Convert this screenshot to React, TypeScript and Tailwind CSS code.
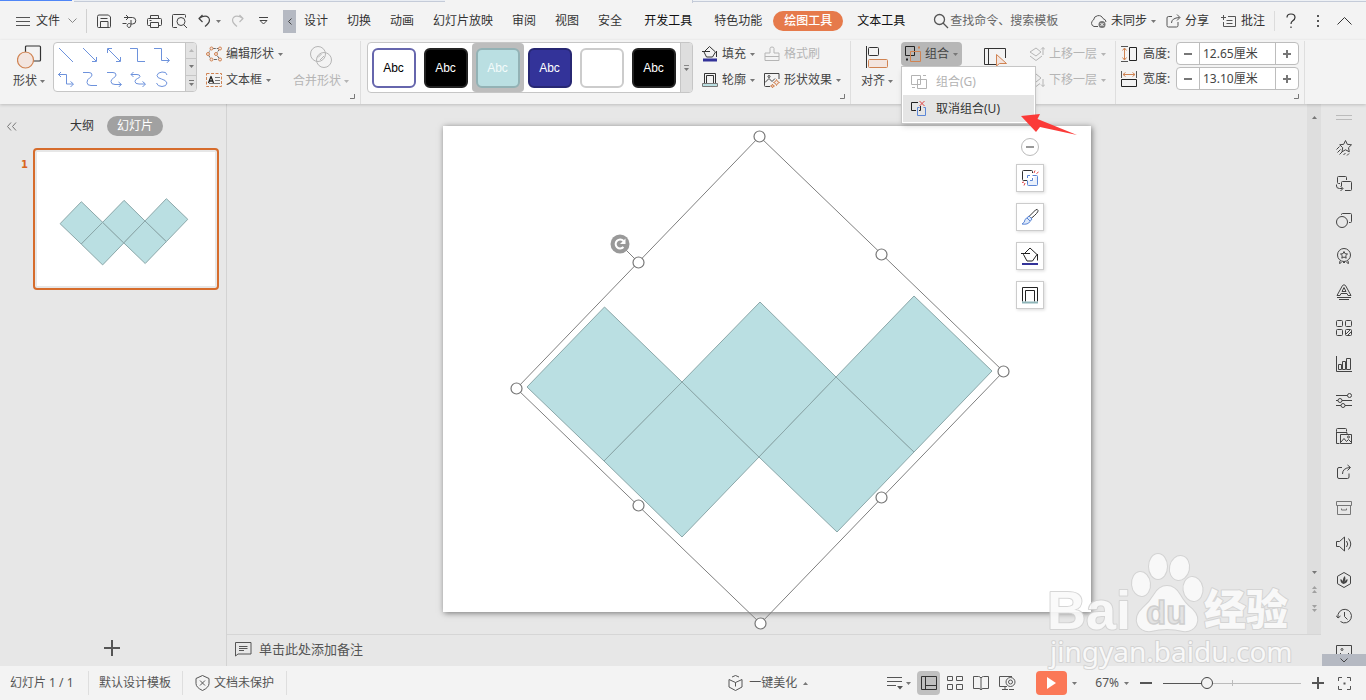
import React from "react";

type Kids = { children?: React.ReactNode };

function Ic({ w = 16, h = 16, className = "", sw = 1, children }: Kids & { w?: number; h?: number; className?: string; sw?: number }) {
  return (
    <svg
      width={w}
      height={h}
      viewBox={`0 0 ${w} ${h}`}
      fill="none"
      stroke="currentColor"
      strokeWidth={sw}
      strokeLinejoin="round"
      className={`block shrink-0 ${className}`}
      aria-hidden="true"
    >
      {children}
    </svg>
  );
}

function Caret({ className = "" }: { className?: string }) {
  return (
    <svg width="5" height="3" viewBox="0 0 5 3" className={`block shrink-0 ${className}`} aria-hidden="true">
      <path d="M0 0h5L2.500 3z" fill="#777" />
    </svg>
  );
}

function Corner() {
  return (
    <Ic w={6} h={6} className="absolute right-1 bottom-1 text-[#777]">
      <path d="M4.500 0v4.500H0" />
    </Ic>
  );
}

const orange = "#d08352";
const blue = "#5b86d6";

/* ---------- menu bar ---------- */

const tabs = ["设计", "切换", "动画", "幻灯片放映", "审阅", "视图", "安全"];

function MenuBar() {
  return (
    <nav className="flex h-[37px] shrink-0 items-center pl-4 pr-[14px] pb-px text-[#333]">
      <button className="flex items-center">
        <Ic w={14} h={11}><path d="M0 1.500h14M0 5.500h14M0 9.500h14" stroke="#555" /></Ic>
        <span className="ml-[6px]">文件</span>
        <Ic w={9} h={6} className="ml-2 text-[#888]"><path d="M.5.5l4 4 4-4" /></Ic>
      </button>
      <span className="ml-[9px] h-6 w-px bg-[#d0d0d0]" />
      <div className="ml-[10px] flex items-center gap-[10px] text-[#444]">
        <button aria-label="保存">
          <Ic w={15} h={15}><path d="M.5 12.500v-10q0-1.500 1.500-1.500h9.500l2 2v9.500q0 1-1 1H1.500q-1 0-1-1zM3.500 4.500h7M3.500 13.500V7.500h7.500v6" /></Ic>
        </button>
        <button aria-label="输出">
          <Ic w={15} h={15}><path d="M2 3.500h8.500a3 3 0 0 1 0 6.500H8.500a2 2 0 1 0-1.500 3.500q2 0 2-3V6M4 1l2.500 2.500L4 6M.5 9.500h4" /></Ic>
        </button>
        <button aria-label="打印">
          <Ic w={15} h={15}><path d="M3.500 4.500v-3h8v3M3 11.500H1.500q-1 0-1-1v-5q0-1 1-1h12q1 0 1 1v5q0 1-1 1H12M3.500 8.500h8v5h-8zM2.500 6.500h2" /></Ic>
        </button>
        <button aria-label="打印预览">
          <Ic w={16} h={15}><path d="M5 13.500H1.500q-1 0-1-1v-11q0-1 1-1h11q1 0 1 1v2M12 11l3 3" /><circle cx="9" cy="7.500" r="4" /></Ic>
        </button>
        <button className="flex items-center" aria-label="撤销">
          <Ic w={13} h={14} sw={1.2}><path d="M4.500 1L1 4.500 4.500 8M1 4.500q6-4 9.500-1 3 4-3.500 9" /></Ic>
          <Caret className="ml-[5px]" />
        </button>
        <button aria-label="恢复" className="text-[#bbb]">
          <Ic w={13} h={14} sw={1.2}><path d="M8.500 1L12 4.500 8.500 8M12 4.500q-6-4-9.500-1-3 4 3.500 9" /></Ic>
        </button>
      </div>
      <button aria-label="自定义" className="ml-[15px] text-[#444]">
        <Ic w={9} h={8}><path d="M0 .5h9M1 3.500h7l-3.500 3.500z" /></Ic>
      </button>
      <button aria-label="向左滚动" className="ml-[15px] flex h-[23px] w-[13px] items-center justify-center bg-[#b5b9c2]">
        <Ic w={4} h={7} className="text-[#444]"><path d="M3.500.5l-3 3 3 3" /></Ic>
      </button>
      <div className="ml-2 flex items-center gap-[19px] whitespace-nowrap">
        {tabs.map((t) => <button key={t}>{t}</button>)}
      </div>
      <button className="ml-[22px] whitespace-nowrap text-[#111]">开发工具</button>
      <button className="ml-[22px] whitespace-nowrap">特色功能</button>
      <button className="ml-[11px] h-5 whitespace-nowrap rounded-full bg-[#e67a4b] px-[11px] font-medium text-white">绘图工具</button>
      <button className="ml-[14px] whitespace-nowrap text-[#111]">文本工具</button>
      <label className="ml-7 flex items-center">
        <Ic w={16} h={16} sw={1.3} className="text-[#555]"><circle cx="6.500" cy="6.500" r="5" /><path d="M10 10l5 5" /></Ic>
        <input aria-label="查找" placeholder="查找命令、搜索模板" className="ml-px w-[112px] bg-transparent outline-none placeholder:text-[#666]" />
      </label>
      <div className="ml-auto flex items-center whitespace-nowrap">
        <button className="flex items-center">
          <Ic w={17} h={15} className="text-[#555]">
            <path d="M8 12.500H4A3.500 3.500 0 0 1 3.500 6 5 5 0 0 1 13 4.500q3 1 3 3.500" />
            <circle cx="12" cy="10.500" r="3.500" fill="#777" stroke="none" />
            <path d="M10.500 9l3 3m0-3l-3 3" stroke="#fff" />
          </Ic>
          <span className="ml-1">未同步</span>
          <Caret className="ml-1" />
        </button>
        <button className="ml-[10px] flex items-center">
          <Ic w={15} h={14} className="text-[#555]"><path d="M6 2.500H2.500q-1.500 0-1.500 1.500v7.500q0 1.500 1.500 1.500h8q1.500 0 1.500-1.500V8M5.500 9Q5.500 4 13.500 3.500M11 .5l3 3-3 3" /></Ic>
          <span className="ml-1">分享</span>
        </button>
        <button className="ml-3 flex items-center">
          <Ic w={16} h={15} className="text-[#555]"><path d="M7 2.500h7.500v10h-12V8M0 3.500h5M2.500 1v5M5.500 6.500h6M5.500 9.500h6" /></Ic>
          <span className="ml-1">批注</span>
        </button>
        <span className="ml-[9px] h-5 w-px bg-[#dcdcdc]" />
        <button aria-label="帮助" className="ml-[11px]">
          <Ic w={10} h={16} sw={1.2}><path d="M1 4.500Q1 1 5 1t4 3.500Q9 6.500 6.500 8 5 9 5 11M5 13.500v1.500" /></Ic>
        </button>
        <button aria-label="更多" className="ml-5">
          <Ic w={4} h={14}><path d="M1 1h2v2H1zM1 6h2v2H1zM1 11h2v2H1z" fill="#555" stroke="none" /></Ic>
        </button>
        <button aria-label="收起" className="ml-[17px]">
          <Ic w={15} h={8}><path d="M.5 7.500l7-7 7 7" /></Ic>
        </button>
      </div>
    </nav>
  );
}

/* ---------- ribbon ---------- */

const lines: React.ReactNode[] = [
  <path d="M1 1l14 14" />,
  <path d="M1 1l13 13M14.500 10v4.500H10" />,
  <path d="M2 2l12 12M14.500 10v4.500H10M1.500 6V1.500H6" />,
  <path d="M0 1.500h7.500v13H15" />,
  <path d="M0 1.500h7.500v12H15M12.500 10.500l3 3-3 2.500" />,
  <path d="M0 3.500h8.500v9.500H15M3 1L.5 3.500 3 6M12.500 10.500l3 2.500-3 3" />,
  <path d="M1 1.500h6q3 0 3 2.500 0 1.500-2.500 3T5 11.500q0 3 4 3h6" />,
  <path d="M1 1.500h6q3 0 3 2.500 0 1.500-2.500 3T5 10.500q0 3 4 3h6M12.500 11l3 2.500-3 2.500" />,
  <path d="M1 3.500h6q3 0 3 2 0 1-2.500 2T5 10.500q0 2.500 4 2.500h6M3.500 1L1 3.500 3.500 6M12.500 10.500l3 2.500-3 3" />,
  <path d="M13 4Q12.500.5 8 1T3 4.500Q3 7 7.500 8t5.500 4q-.5 3.500-5 3.500T2.500 12" />,
];

const swatches = [
  { k: "a", c: "border-[#6666ad] bg-white text-black", label: "Abc" },
  { k: "b", c: "border-[#222] bg-black text-white", label: "Abc" },
  { k: "c", c: "border-[#93b2b5] bg-[#badfe2] text-[#f3fbfb]", label: "Abc", on: true },
  { k: "d", c: "border-[#272773] bg-[#333399] text-white", label: "Abc" },
  { k: "e", c: "border-[#cccccc] bg-white text-white", label: "" },
  { k: "f", c: "border-[#222] bg-black text-white", label: "Abc" },
];

function Small({ icon, text, caret, off, className = "" }: { icon: React.ReactNode; text: string; caret?: boolean; off?: boolean; className?: string }) {
  return (
    <button className={`flex h-[26px] items-center whitespace-nowrap ${off ? "text-[#b5b5b5]" : "text-[#444]"} ${className}`}>
      {icon}
      <span className="ml-1">{text}</span>
      {caret && <Caret className={off ? "ml-1 opacity-50" : "ml-1"} />}
    </button>
  );
}

function Big({ icon, text, off, caret = true }: { icon: React.ReactNode; text: string; off?: boolean; caret?: boolean }) {
  return (
    <button className={`flex flex-col items-center whitespace-nowrap ${off ? "text-[#b5b5b5]" : "text-[#444]"}`}>
      <span className="flex h-8 items-center">{icon}</span>
      <span className="flex items-center">
        {text}
        {caret && <Caret className={off ? "ml-[3px] opacity-50" : "ml-[3px]"} />}
      </span>
    </button>
  );
}

function GroupMenu() {
  return (
    <div className="absolute left-0 top-[25px] z-20 w-[135px] border border-[#c6c6c6] bg-white p-px shadow-md">
      <button className="flex h-[27px] w-full items-center pl-2 text-[#b3b3b3]">
        <Ic><path d="M.5 1.500h9v9h-9zM6.500 5.500h9v9h-9zM12 1.500h3M1 13.500h3" /></Ic>
        <span className="ml-[9px]">组合(G)</span>
      </button>
      <button className="flex h-[27px] w-full items-center bg-[#e5e5e5] pl-2 text-[#333]">
        <Ic>
          <path d="M5 9.500H.5v-8H7M9.500 5v4.500H8" stroke="#222" />
          <path d="M8.500 6.500h-2v8h8v-8h-2" stroke={blue} />
          <path d="M8.500 0l5 5m0-5l-5 5" stroke="#e04545" />
        </Ic>
        <span className="ml-[9px]">取消组合(U)</span>
      </button>
      <svg width="58" height="24" viewBox="0 0 58 24" className="absolute left-[118px] top-[45px]" aria-hidden="true">
        <path d="M1 4l19-2-2.500 5L57 23 20 15l-4 5z" fill="#fb3a38" />
      </svg>
    </div>
  );
}

function SizeField({ id, label, value, icon }: { id: string; label: string; value: string; icon: React.ReactNode }) {
  return (
    <div className="flex h-[25px] items-center text-[#444]">
      {icon}
      <label htmlFor={id} className="ml-[6px] w-[33px] whitespace-nowrap">{label}</label>
      <div className="flex h-[23px] w-[123px] overflow-hidden rounded border border-[#bdbdbd] bg-white">
        <button aria-label={`减小${label}`} className="flex w-[22px] shrink-0 items-center justify-center">
          <Ic w={8} h={8} sw={2}><path d="M0 4h8" stroke="#777" /></Ic>
        </button>
        <input id={id} defaultValue={value} className="w-0 flex-1 border-x border-[#bdbdbd] pl-[3px] outline-none" />
        <button aria-label={`增大${label}`} className="flex w-[22px] shrink-0 items-center justify-center">
          <Ic w={8} h={8} sw={2}><path d="M0 4h8M4 0v8" stroke="#777" /></Ic>
        </button>
      </div>
    </div>
  );
}

function Ribbon() {
  return (
    <section className="relative z-10 flex h-16 shrink-0 bg-[#f3f3f3] pt-px shadow-[0_1px_3px_rgba(0,0,0,0.18)]">
      <div className="relative flex w-[361px] shrink-0 border-r border-[#dedede] pl-[13px]">
        <Big
          text="形状"
          icon={
            <Ic w={25} h={24} sw={1.2}>
              <rect x="8.500" y="1" width="15" height="15" rx="1" stroke="#333" />
              <circle cx="8.500" cy="15" r="8" fill="#f3e5df" stroke={orange} />
            </Ic>
          }
        />
        <div className="ml-2 mt-px flex h-[50px] w-[144px] overflow-hidden rounded border border-[#c6c6c6] bg-white">
          <div className="grid w-[131px] grid-cols-[repeat(5,24px)] content-start justify-start text-[#6d92dc]">
            {lines.map((l, i) => (
              <button key={i} aria-label="线条" className="flex h-6 w-6 items-center justify-center"><Ic>{l}</Ic></button>
            ))}
          </div>
          <div className="flex flex-1 flex-col divide-y divide-[#c6c6c6] border-l border-[#c6c6c6] bg-[#e3e3e3]">
            <button aria-label="上翻" className="flex flex-1 items-center justify-center"><Caret className="rotate-180 opacity-40" /></button>
            <button aria-label="下翻" className="flex flex-1 items-center justify-center"><Caret /></button>
            <button aria-label="更多线条" className="flex flex-1 flex-col items-center justify-center gap-[2px]"><span className="h-px w-[5px] bg-[#777]" /><Caret /></button>
          </div>
        </div>
        <div className="ml-[9px]">
          <Small
            caret
            text="编辑形状"
            icon={
              <Ic>
                <path d="M2 8l3-5.500h9L10 8l4 5.500H5z" stroke="#666" strokeDasharray="3 1" />
                <g fill="#f3e5df" stroke={orange}><circle cx="2" cy="8" r="1.500" /><circle cx="5.500" cy="2.500" r="1.500" /><circle cx="14" cy="2.500" r="1.500" /><circle cx="10" cy="8" r="1.500" /><circle cx="5.500" cy="13.500" r="1.500" /><circle cx="14" cy="13.500" r="1.500" /></g>
              </Ic>
            }
          />
          <Small
            caret
            text="文本框"
            icon={
              <Ic>
                <rect x=".5" y="1.500" width="15" height="13" stroke={orange} strokeDasharray="3 1.500" />
                <path d="M2.500 11L5 4.500 7.500 11M3.500 9h3" stroke="#222" strokeWidth="1.300" />
                <path d="M9 5.500h5M9 8.500h5M3 11.500h11" stroke="#777" />
              </Ic>
            }
          />
        </div>
        <div className="ml-[10px]">
          <Big
            off
            text="合并形状"
            icon={<Ic w={24} h={24}><circle cx="9" cy="9" r="7.500" /><circle cx="15" cy="15" r="7.500" /><path d="M9 12.500L12.500 9M11 15l4-4" /></Ic>}
          />
        </div>
        <Corner />
      </div>

      <div className="relative flex w-[490px] shrink-0 border-r border-[#dedede] pl-[6px]">
        <div className="mt-px flex h-[51px] w-[326px] overflow-hidden rounded border border-[#c6c6c6] bg-white font-['Liberation_Sans','Noto_Sans_CJK_SC',sans-serif]">
          <div className="flex flex-1">
            {swatches.map((s) => (
              <button key={s.k} aria-label="形状样式" className={`flex w-[52px] shrink-0 items-center justify-center rounded pr-px ${s.on ? "bg-[#bdbdbd]" : ""}`}>
                <span className={`flex h-10 w-11 items-center justify-center rounded-md border-2 ${s.c}`}>{s.label}</span>
              </button>
            ))}
          </div>
          <button aria-label="更多样式" className="flex w-3 shrink-0 flex-col items-center justify-center gap-[2px] border-l border-[#c6c6c6] bg-[#dedede]">
            <span className="h-px w-[5px] bg-[#888]" /><Caret />
          </button>
        </div>
        <div className="ml-[9px]">
          <Small caret text="填充" icon={<Ic className="text-[#333]"><path d="M2 6l5.500-5.500L13.500 6 10.500 11h-6zM0 5.500h8M14.500 5v6" /><path d="M1 14h14" stroke="#333399" strokeWidth="3" /></Ic>} />
          <Small caret text="轮廓" icon={<Ic className="text-[#333]"><path d="M2.500 12V1.500h11V12M4.500 11.500v-8h7v8" /><path d="M.5 11.500h15v3H.5z" fill="#badfe2" stroke="#777" /></Ic>} />
        </div>
        <div className="ml-[9px]">
          <Small off text="格式刷" icon={<Ic><path d="M6 7V2.500q0-1.500 2-1.500t2 1.500V7h5v7.500H1V7zM1 10.500h14" /></Ic>} />
          <Small
            caret
            text="形状效果"
            icon={
              <Ic>
                <path d="M6 14.500H1.500q-1 0-1-1V1.500h14.500V7M1 10.500l4-4 3 3 3-3" stroke="#444" />
                <circle cx="5" cy="4.500" r="1" /><path d="M12.500 7.500l1 2 2 1-2 1-1 2-1-2-2-1 2-1zM8.500 12l.5 1.500 1.500.5-1.500.5-.5 1.500-.5-1.500-1.500-.5 1.500-.5z" fill="#f3e5df" stroke={orange} />
              </Ic>
            }
          />
        </div>
        <Corner />
      </div>

      <div className="relative flex w-[265px] shrink-0 border-r border-[#dedede] pl-[10px]">
        <Big
          text="对齐"
          icon={<Ic w={24} h={24}><path d="M1.500 1v22" stroke="#333" /><rect x="3.500" y="2.500" width="10" height="8" rx="1" stroke="#333" /><rect x="3.500" y="14.500" width="19" height="8" rx="1" fill="#f3e5df" stroke={orange} /></Ic>}
        />
        <div className="relative ml-2">
          <button className="mt-px flex h-6 w-[61px] items-center whitespace-nowrap rounded bg-[#b7b7b7] pl-1 text-[#444]">
            <Ic><path d="M.5.5h9v9h-9z" stroke="#222" /><path d="M5.500 5.500h10v10h-10z" stroke={orange} /><path d="M13 1.500h2" stroke={orange} strokeWidth="2" /><path d="M1 13.500h2" stroke="#222" strokeWidth="2" /></Ic>
            <span className="ml-1">组合</span>
            <Caret className="ml-1" />
          </button>
          <GroupMenu />
        </div>
        <button aria-label="选择窗格" className="ml-[22px] mt-[6px] self-start">
          <Ic w={24} h={20}><path d="M13 17.500H.5v-16h21V11M4.500 1.500v16" stroke="#333" /><path d="M12.500 7.500V19l3-2.500h7z" fill="#f3e5df" stroke={orange} /></Ic>
        </button>
        <div className="ml-[21px]">
          <Small off caret text="上移一层" icon={<Ic><path d="M1 6l6-4 5 4-5 4zM1 10l6 4.500 6-4.500M14 9V1.500M12 3.500l2-2 2 2" /></Ic>} />
          <Small off caret text="下移一层" icon={<Ic><path d="M1 6l6-4 5 4-5 4zM1 10l6 4.500 4-3M14 7v7.500M12 12.500l2 2 2-2" /></Ic>} />
        </div>
      </div>

      <div className="relative w-[189px] shrink-0 border-r border-[#dedede] pl-[5px]">
        <SizeField id="height" label="高度:" value="12.65厘米" icon={<Ic><path d="M0 .5h7M0 15.500h7" stroke="#555" /><rect x="8.500" y="1.500" width="7" height="13" stroke="#222" /><path d="M3.500 2v12M1.500 4.500l2-2.500 2 2.500M1.500 11.500l2 2.500 2-2.500" stroke={orange} /></Ic>} />
        <SizeField id="width" label="宽度:" value="13.10厘米" icon={<Ic><path d="M.5 0v7M15.500 0v7" stroke="#555" /><rect x=".5" y="8.500" width="15" height="7" stroke="#222" /><path d="M2 3.500h12M4.500 1.500L2 3.500l2.500 2M11.500 1.500l2.500 2-2.500 2" stroke={orange} /></Ic>} />
        <Corner />
      </div>
    </section>
  );
}

/* ---------- slide ---------- */

const squares = [
  "161.5,181 239,256 161,335 84,261",
  "239,256 316,331 239,411 161,335",
  "317,176 393,251 316,331 239,256",
  "393,251 471,326 394,406 316,331",
  "471,170 549,245 471,326 393,251",
];

const handles = [
  [316.5, 10.5], [438.5, 128.5], [560.5, 245.5], [438.5, 371.5],
  [317.5, 497.5], [195.5, 379.5], [73.5, 262.5], [195.5, 136.5],
];

function Squares() {
  return (
    <g fill="#badfe2" stroke="#8ba7a9">
      {squares.map((p) => <polygon key={p} points={p} vectorEffect="non-scaling-stroke" />)}
    </g>
  );
}

function SidePanel() {
  return (
    <aside className="flex w-[227px] shrink-0 flex-col border-r border-[#d3d3d3]">
      <div className="mt-3 flex h-5 items-center pl-[7px] text-[#333]">
        <button aria-label="折叠"><Ic w={10} h={9} className="text-[#777]"><path d="M4 .5l-3.500 4 3.500 4M9 .5l-3.500 4 3.500 4" /></Ic></button>
        <button className="ml-[53px]">大纲</button>
        <button className="ml-[13px] h-5 rounded-full bg-[#a1a1a1] px-[10px] text-white">幻灯片</button>
      </div>
      <div className="mt-3 flex pl-[21px]">
        <span className="w-3 pt-[9px] font-['DejaVu_Sans','Noto_Sans_CJK_SC',sans-serif] text-[10px] font-bold text-[#d9661f]">1</span>
        <div className="w-[186px] rounded border-2 border-[#d66c2c] p-[2px]">
          <svg viewBox="0 0 648 486" className="block w-full bg-white"><Squares /></svg>
        </div>
      </div>
      <button aria-label="新建幻灯片" className="mx-auto mt-auto mb-[10px] pr-[2px]">
        <Ic w={16} h={16} sw={2} className="text-[#555]"><path d="M0 8h16M8 0v16" /></Ic>
      </button>
    </aside>
  );
}

const quick: { k: string; i: React.ReactNode }[] = [
  { k: "取消组合", i: <Ic w={18} h={18}><path d="M6 11.500H2.500q-1 0-1-1v-8q0-1 1-1h8q1 0 1 1V4" stroke="#333" /><path d="M6.500 11.500v5h10v-9h-3v4z" stroke="none" fill="#e9f0fb" /><path d="M11.500 6.500h4q1 0 1 1v8q0 1-1 1h-8q-1 0-1-1v-4M6.500 9V6.500H9M11.500 9v2.500H9" stroke={blue} /><path d="M13 4l1-2.500M15.500 4.500l2-1.500M1 13.500l2-.5M3 16.500l1-2.500" stroke="#e04545" /></Ic> },
  { k: "画笔", i: <Ic w={18} h={18}><path d="M8 8.500L14.500 2q2-1.500 2.500.5T10 10.500z" stroke="#333" /><path d="M8 8l3 3-2 2.500Q7 17 1 16q3-1.500 3-4.500zM6 10l3 3" stroke={blue} fill="#dce8fa" /></Ic> },
  { k: "填充", i: <Ic w={18} h={18} className="text-[#222]"><path d="M2.500 7.500L9 1l7 6.500-4.500 6.500H6zM0 6.500h9M16.500 7v6.500" /><path d="M1 17h16" stroke="#333399" strokeWidth="2" /></Ic> },
  { k: "轮廓", i: <Ic w={18} h={18} className="text-[#222]"><path d="M1.500 15.500V1.500h15v14M4.500 15.500v-11h9v11" /><path d="M1 16.500h16" stroke="#8fb5b8" strokeWidth="2" /></Ic> },
];

function Canvas() {
  return (
    <div className="flex min-w-0 flex-1 items-center justify-center">
      <div className="relative aspect-[4/3] w-3/5 bg-white shadow-[1px_1px_6px_rgba(0,0,0,0.5)]">
        <svg viewBox="0 0 648 486" className="absolute inset-0 z-[1] h-full w-full overflow-visible" role="img" aria-label="组合形状">
          <Squares />
          <polygon points="316.5,10.5 560.5,245.5 317.5,497.5 73.5,262.5" fill="none" stroke="#7f7f7f" />
          <path d="M195.500 136.500L177 118" stroke="#7f7f7f" />
          {handles.map(([x, y]) => <circle key={`${x}-${y}`} cx={x} cy={y} r="5.500" fill="#fff" stroke="#777" strokeWidth="1.200" />)}
          <circle cx="177" cy="118" r="9.500" fill="#999" />
          <path d="M180.500 121a4.500 4.500 0 1 1 0-6" fill="none" stroke="#fff" strokeWidth="2" />
          <path d="M182.500 112.500v5.500H177z" fill="#fff" />
        </svg>
        <div className="absolute right-[47px] top-3 z-[2] flex flex-col items-center gap-[11px]">
          <button aria-label="收起工具" className="-mb-[3px] flex h-[18px] w-[18px] items-center justify-center rounded-full border border-[#bbb] bg-white">
            <span className="h-[2px] w-2 bg-[#999]" />
          </button>
          {quick.map((q) => (
            <button key={q.k} aria-label={q.k} className="flex h-7 w-7 items-center justify-center border border-[#ccc] bg-white shadow-[1px_1px_3px_rgba(0,0,0,0.15)]">{q.i}</button>
          ))}
        </div>
      </div>
    </div>
  );
}

function Double({ up }: { up?: boolean }) {
  return (
    <button aria-label={up ? "上一张" : "下一张"} className={`flex flex-col items-center gap-px opacity-60 ${up ? "rotate-180" : ""}`}>
      <Caret /><Caret />
    </button>
  );
}

function Scrollbar() {
  return (
    <div className="flex w-[14px] shrink-0 flex-col items-center bg-[#dedede] pt-3 pb-[22px]">
      <button aria-label="向上滚动"><Caret className="rotate-180" /></button>
      <button aria-label="向下滚动" className="mt-auto mb-3"><Caret /></button>
      <Double up />
      <div className="h-3" />
      <Double />
    </div>
  );
}

/* ---------- right tool strip ---------- */

const tools: { k: string; i: React.ReactNode }[] = [
  { k: "动画", i: <path d="M9.500.5l1.800 3.800 4.200.5-3 2.900.8 4.100-3.800-2-3.500 2 .7-4.100-3-2.900 4-.5zM.5 9.500l3-3M1.500 12.500l3-3M3.500 14.500l3-3M7.500 15l2-2M11 15.500l2-2" /> },
  { k: "切换", i: <path d="M4 7.500H2.500q-1 0-1-1v-5q0-1 1-1h7q1 0 1 1V4M5.500 10V6.500q0-1 1-1h8q1 0 1 1v7q0 1-1 1H9M.5 8.500V10q0 2.500 3 2.500h3M4.500 10l2.500 2.500L4.500 15" /> },
  { k: "形状", i: <><circle cx="6" cy="10" r="5.500" /><path d="M5.500 3V2.500q0-1 1-1h8q1 0 1 1v7q0 1-1 1H13" /></> },
  { k: "图标", i: <><circle cx="8" cy="7" r="6.500" /><path d="M8 3.500l1 2.200 2.500.3-1.800 1.700.5 2.500L8 9l-2.200 1.200.5-2.500L4.500 6l2.500-.3zM4 13l-.5 2.500 2-1M12 13l.5 2.500-2-1M7 14.500h2" /></> },
  { k: "艺术字", i: <path d="M1 11.500L6.500 1.500q1.500-1.500 3 0L15 11.500h-3L11 9.500H5L4 11.500zM6 7.500l2-4 2 4zM1 13.500h14M3 15.500h10" /> },
  { k: "图库", i: <><rect x=".5" y=".5" width="6" height="6" rx="1" /><rect x="9.500" y=".5" width="6" height="6" rx="1" /><rect x=".5" y="9.500" width="6" height="6" rx="1" /><rect x="9.500" y="9.500" width="6" height="6" rx="1" /><path d="M10 14l4-4M12 15l3-3" /></> },
  { k: "图表", i: <path d="M.5 0v15.500H16M2.500 13.500V8.500h3v5zM6.500 13.500V5.500h3v8zM10.500 13.500v-11h4v11z" /> },
  { k: "设置", i: <><path d="M0 3.500h11.500M0 8.500h2M6 8.500h10M0 13.500h5M9 13.500h7" /><circle cx="13.500" cy="3.500" r="2" /><circle cx="4" cy="8.500" r="2" /><circle cx="7" cy="13.500" r="2" /></> },
  { k: "图片", i: <><path d="M3.500 15.500H.5V3.500M.5 4.500h10.500v2M.5 3.500v-2q0-1 1-1h8q1 0 1 1v2" /><path d="M4.500 6.500h11v9h-11zM5 14l3-3.500 2.500 3 2-2 3 3" /><circle cx="12.500" cy="9" r="1" /></> },
  { k: "分享", i: <path d="M6 3.500H3Q1.500 3.500 1.500 5v8Q1.500 14.500 3 14.500h8.500q1.500 0 1.500-1.500V9.500M6.500 10Q6.500 4 14 3.500M11.500 1l3 2.500-3 3" /> },
  { k: "归档", i: <path d="M.5 1.500h15v4H.5zM1.500 5.500h13v9h-13zM5.500 8.500v1.500h5V8.500" stroke="#777" /> },
  { k: "声音", i: <path d="M.5 5.500h3L8.500 1v14L3.500 10.500h-3zM10.500 5q2.500 3 0 6M12.500 2.500q4.500 5.500 0 11" /> },
  { k: "推荐", i: <><path d="M8 .5l6.500 3.800v7.400L8 15.500l-6.500-3.800V4.300z" /><path d="M7.500 12Q4 11 4.500 7q2 .5 2.500 2.500Q6.500 6 9 4q1 2-.5 6 1-2.500 3-3Q12 11 7.500 12z" fill="currentColor" stroke="none" /></> },
  { k: "历史", i: <path d="M2 9.500a6.800 6.800 0 1 1 2.500 4M8.500 4v4.500l3 3M0 7.500l2 2.500 2.500-2" /> },
];

function ToolStrip() {
  return (
    <aside className="flex w-[45px] shrink-0 flex-col pl-px text-[#444]">
      <div className="flex h-[26px] shrink-0 flex-col items-center justify-center gap-[3px]">
        <span className="h-px w-4 bg-[#bbb]" /><span className="h-px w-4 bg-[#bbb]" />
      </div>
      <div className="flex min-h-0 flex-1 flex-col items-center overflow-hidden">
        {tools.map((t) => (
          <button key={t.k} aria-label={t.k} className="flex h-9 w-full shrink-0 items-center justify-center"><Ic>{t.i}</Ic></button>
        ))}
        <button aria-label="相册" className="mt-[11px] shrink-0"><Ic><path d="M.5 12V.5h15V12M2 11l3-3M12 8l3 3" /><circle cx="6" cy="4.500" r="1" /></Ic></button>
      </div>
      <button aria-label="更多工具" className="flex h-3 shrink-0 items-center justify-center bg-[#b5b9c2]">
        <Ic w={8} h={5}><path d="M.5.5l3.500 3.500 3.500-3.500" /></Ic>
      </button>
    </aside>
  );
}

/* ---------- status bar ---------- */

function StatusBar() {
  return (
    <footer className="flex h-[34px] shrink-0 items-center bg-[#f3f3f3] whitespace-nowrap text-[#555]">
      <div className="flex h-6 items-center divide-x divide-[#dedede] [&>*]:h-6">
        <span className="flex w-[89px] items-center pl-[10px]">幻灯片 1 / 1</span>
        <span className="flex w-[94px] items-center pl-[10px]">默认设计模板</span>
        <button className="flex w-[104px] items-center pl-3">
          <Ic w={15} h={16}><path d="M7.500.5l6.500 3v5q0 4-6.500 7Q1 12.500 1 8.500v-5zM5 5.500l5 5m0-5l-5 5" /></Ic>
          <span className="ml-1">文档未保护</span>
        </button>
        <span className="w-px" />
      </div>
      <div className="ml-auto flex items-center">
        <button className="flex items-center">
          <Ic w={15} h={16}><path d="M1 4.500l6.500 3L14 4.500M1 4.500V12l6.500 3.500L14 12V4.500M7.500 7.500v4M4 2l3.500-1.500L11 2" /></Ic>
          <span className="ml-[6px]">一键美化</span>
          <Caret className="ml-[6px] rotate-180" />
        </button>
        <button aria-label="备注" className="ml-[79px] flex items-center">
          <Ic w={16} h={14}><path d="M0 1.500h15M0 5.500h15M0 9.500h9" /><path d="M10 10h6l-3 3.500z" fill="currentColor" stroke="none" /></Ic>
          <Caret className="ml-[3px]" />
        </button>
        <button aria-label="普通视图" className="ml-[6px] flex h-6 w-[23px] items-center justify-center rounded bg-[#c0c0c0] text-[#333]">
          <Ic><path d="M.5 1.500h15v13H.5zM4.500 1.500v13M4.500 10.500h11" /></Ic>
        </button>
        <button aria-label="浏览视图" className="ml-[7px]"><Ic><path d="M.5 1.500h5v4h-5zM9.500 1.500h6v4h-6zM.5 9.500h5v5h-5zM9.500 9.500h6v5h-6z" /></Ic></button>
        <button aria-label="阅读视图" className="ml-[10px]"><Ic><path d="M8 3v12M8 3Q7 1.500 5.500 1.500h-5v12H6q1.500 0 2 1.500.5-1.500 2-1.500h5.500v-12h-5Q9 1.500 8 3z" /></Ic></button>
        <button aria-label="放映设置" className="ml-[10px]"><Ic w={17}><path d="M8 11.500H.5v-10H13M3 14.500h6M6 11.500v3M10 14.500h5" /><circle cx="11.500" cy="7" r="4.500" /><circle cx="11.500" cy="7" r="2" /></Ic></button>
        <button aria-label="放映" className="ml-5 flex h-6 w-[31px] items-center justify-center rounded bg-[#fb7857]">
          <svg width="9" height="12" viewBox="0 0 9 12"><path d="M0 0l9 6-9 6z" fill="#fff" /></svg>
        </button>
        <Caret className="ml-[5px]" />
        <button className="ml-[18px] flex items-center">67%<Caret className="ml-[5px]" /></button>
        <button aria-label="缩小" className="ml-[11px]"><Ic w={12} h={12} sw={2}><path d="M0 6h12" /></Ic></button>
        <div className="relative ml-[11px] flex h-5 w-[138px] items-center">
          <input
            type="range"
            aria-label="缩放"
            defaultValue={30}
            className="h-px w-full appearance-none bg-[linear-gradient(to_right,#555_32%,#bbb_32%)] [&::-webkit-slider-thumb]:h-3 [&::-webkit-slider-thumb]:w-3 [&::-webkit-slider-thumb]:appearance-none [&::-webkit-slider-thumb]:rounded-full [&::-webkit-slider-thumb]:border [&::-webkit-slider-thumb]:border-[#444] [&::-webkit-slider-thumb]:bg-[#f3f3f3]"
          />
          <span className="absolute left-1/2 h-[6px] w-px bg-[#bbb]" />
        </div>
        <button aria-label="放大" className="ml-[11px]"><Ic w={12} h={12} sw={2}><path d="M0 6h12M6 0v12" /></Ic></button>
        <button aria-label="适应窗口" className="ml-[14px] mr-[15px]"><Ic w={13} h={13}><path d="M.5 4V.5H4M9 .5h3.500V4M12.500 9v3.500H9M4 12.500H.5V9" /><path d="M5.500 5.500h2v2h-2z" fill="currentColor" stroke="none" /></Ic></button>
      </div>
    </footer>
  );
}

function Watermark() {
  return (
    <svg
      width="250"
      height="124"
      viewBox="1046 550 250 124"
      className="pointer-events-none absolute bottom-[26px] right-[70px] z-30"
      aria-hidden="true"
    >
      <g fill="#fafafa" stroke="#d2d2d2" strokeWidth="2" strokeLinejoin="round" paintOrder="stroke" opacity="0.9">
        <text x="1047" y="629" fontFamily="Liberation Sans, sans-serif" fontWeight="700" fontSize="54">Bai</text>
        <ellipse cx="1141" cy="584" rx="9" ry="12" transform="rotate(-6 1141 584)" />
        <ellipse cx="1158" cy="566.500" rx="9" ry="12.500" />
        <ellipse cx="1179.500" cy="568" rx="9.500" ry="12" transform="rotate(12 1179.500 568)" />
        <ellipse cx="1193" cy="589" rx="9.500" ry="12" transform="rotate(-8 1193 589)" />
        <path d="M1167 586q8 0 13 9t12 14q8 8 4 16-4 7-13 6-8-2-16-2t-16 2q-9 1-13-6-4-9 5-17 7-6 11-13 5-9 13-9z" />
        <text x="1204" y="625" fontFamily="Noto Sans CJK SC, sans-serif" fontWeight="900" fontSize="42">经验</text>
        <text x="1050" y="662" fontFamily="Noto Sans, sans-serif" fontSize="28">jingyan.baidu.com</text>
      </g>
      <text x="1146" y="624" fontFamily="Liberation Sans, sans-serif" fontWeight="700" fontSize="33" fill="#e3e3e3" stroke="#cfcfcf" strokeWidth="1.500">du</text>
    </svg>
  );
}

export default function App() {
  return (
    <div className="relative flex h-screen flex-col overflow-hidden bg-[#e7e7e7] font-['Noto_Sans','Noto_Sans_CJK_SC',sans-serif] text-[12px] leading-4">
      <div className="flex h-[3px] shrink-0 bg-[#f3f3f3]">
        <div className="h-px w-[72px] bg-[#4f86f7]" />
        <div className="ml-[2px] h-[2px] w-[371px] border-b border-[#c4cbd8] bg-[#e9edf3]" />
        <div className="w-[248px] border-r border-[#c4cbd8]" />
        <div className="h-[2px] flex-1 border-b border-[#c4cbd8] bg-[#eef1f5]" />
      </div>
      <header className="relative z-10 bg-[#f3f3f3]">
        <MenuBar />
        <Ribbon />
      </header>
      <div className="flex min-h-0 flex-1">
        <SidePanel />
        <main className="flex min-w-0 flex-1 flex-col">
          <div className="flex min-h-0 flex-1"><Canvas /><Scrollbar /></div>
          <label className="flex h-8 shrink-0 items-center border-t border-[#d6d6d6] pb-1 pl-2 text-[13px] text-[#555]">
            <Ic w={17} h={16}><path d="M.5 1.500h15.500v11.500H3L.5 15zM4 5.500h8.500M4 7.500h8.500M4 9.500h5" /></Ic>
            <input aria-label="备注" placeholder="单击此处添加备注" className="ml-[7px] flex-1 bg-transparent outline-none placeholder:text-[#555]" />
          </label>
        </main>
        <ToolStrip />
      </div>
      <StatusBar />
      <Watermark />
    </div>
  );
}
